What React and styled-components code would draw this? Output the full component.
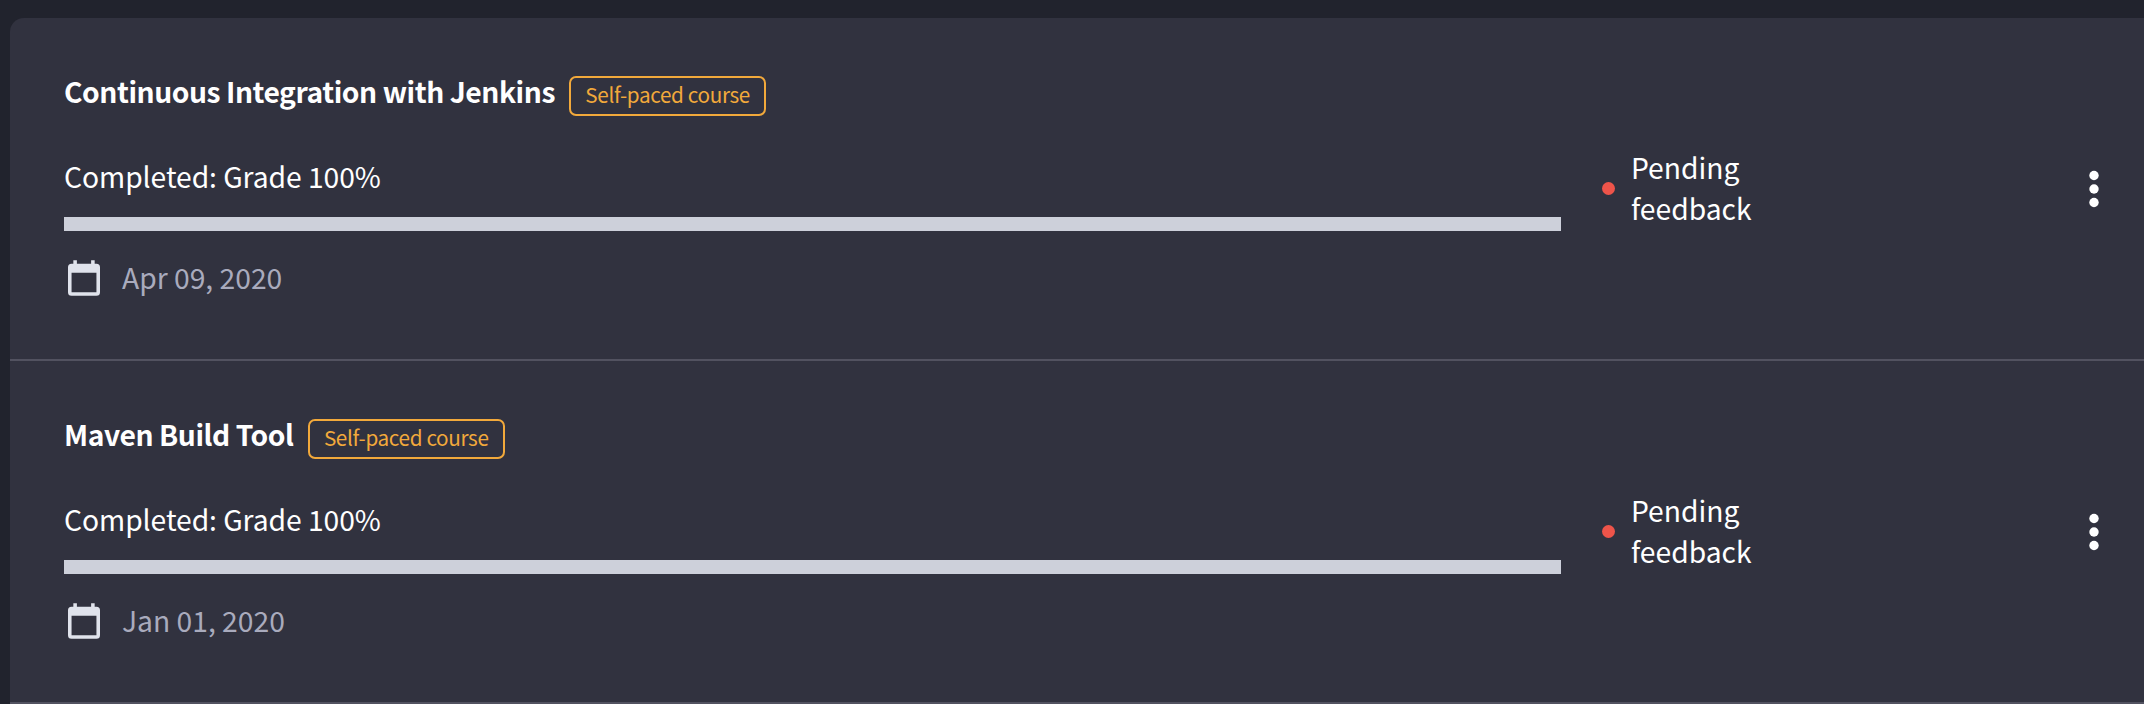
import React from "react";
import styled, { createGlobalStyle } from "styled-components";

const GlobalStyle = createGlobalStyle`
  * { box-sizing: border-box; }
  body {
    margin: 0;
    background: #21232d;
    color: #fff;
    font-family: "Noto Sans CJK SC", "Noto Sans", sans-serif;
    font-size: 28.25px;
    line-height: 41px;
    overflow: hidden;
  }
`;

const Page = styled.main`
  height: 704px;
  padding: 18px 0 0 10px;
  overflow: hidden;
`;

const CourseList = styled.ul`
  margin: 0;
  padding: 0;
  list-style: none;
  background: #31323f;
  border-radius: 14px 0 0 0;
`;

const CourseRow = styled.li`
  display: grid;
  grid-template-columns: 1497px 1fr 28px;
  column-gap: 41px;
  align-items: center;
  height: 343px;
  padding: 0 36px 0 54px;
  border-bottom: 2px solid #525260;
`;

const Details = styled.div`
  display: flex;
  flex-direction: column;
  height: 341px;
  padding-top: 52px;
`;

const Heading = styled.div`
  display: flex;
  align-items: flex-start;
  height: 46px;
`;

const Title = styled.h2`
  margin: 0;
  font-size: 28.25px;
  font-weight: 700;
  letter-spacing: -0.45px;
  line-height: 41px;
  white-space: nowrap;
`;

const Badge = styled.span`
  margin: 6px 0 0 14.4px;
  padding: 0 14px;
  height: 40px;
  border: 2px solid #f2a93b;
  border-radius: 7px;
  color: #f2a93b;
  font-size: 20.7px;
  letter-spacing: -0.35px;
  line-height: 32px;
  white-space: nowrap;
`;

const Grade = styled.div`
  margin-top: 39px;
  height: 41px;
  letter-spacing: -0.05px;
`;

const ProgressTrack = styled.div`
  height: 14px;
  margin-top: 21px;
  background: #464756;
`;

const ProgressFill = styled.div`
  width: ${({ $value }) => $value}%;
  height: 100%;
  background: #cdd0da;
`;

const DateLine = styled.div`
  display: flex;
  align-items: center;
  gap: 22px;
  margin: 25px 0 0 4px;
  color: #a9abbd;

  svg {
    margin-top: 3px;
  }
`;

const Status = styled.div`
  display: flex;
  align-items: center;
  gap: 16px;
`;

const StatusDot = styled.span`
  width: 13px;
  height: 13px;
  border-radius: 50%;
  background: #ee544a;
`;

const StatusText = styled.span`
  width: 130px;
  padding-bottom: 3px;
`;

const MenuButton = styled.button`
  display: flex;
  justify-content: center;
  padding: 0;
  border: 0;
  background: none;
  color: #fff;
`;

const CalendarIcon = () => (
  <svg width="32" height="36" viewBox="3 1 18 20" fill="#e0e3ec">
    <path d="M19 19H5V8h14m0-5h-1V1h-2v2H8V1H6v2H5a2 2 0 0 0-2 2v14a2 2 0 0 0 2 2h14a2 2 0 0 0 2-2V5a2 2 0 0 0-2-2" />
  </svg>
);

const KebabIcon = () => (
  <svg width="10" height="38" viewBox="0 0 10 38" fill="currentColor">
    <circle cx="5" cy="5.5" r="4.7" />
    <circle cx="5" cy="19" r="4.7" />
    <circle cx="5" cy="32.5" r="4.7" />
  </svg>
);

const courses = [
  { title: "Continuous Integration with Jenkins", grade: 100, date: "Apr 09, 2020" },
  { title: "Maven Build Tool", grade: 100, date: "Jan 01, 2020" },
];

export default function App() {
  return (
    <Page>
      <GlobalStyle />
      <CourseList>
        {courses.map((course) => (
          <CourseRow key={course.title}>
            <Details>
              <Heading>
                <Title>{course.title}</Title>
                <Badge>Self-paced course</Badge>
              </Heading>
              <Grade>Completed: Grade {course.grade}%</Grade>
              <ProgressTrack>
                <ProgressFill $value={course.grade} />
              </ProgressTrack>
              <DateLine>
                <CalendarIcon />
                <span>{course.date}</span>
              </DateLine>
            </Details>
            <Status>
              <StatusDot />
              <StatusText>Pending feedback</StatusText>
            </Status>
            <MenuButton aria-label="More options">
              <KebabIcon />
            </MenuButton>
          </CourseRow>
        ))}
      </CourseList>
    </Page>
  );
}
